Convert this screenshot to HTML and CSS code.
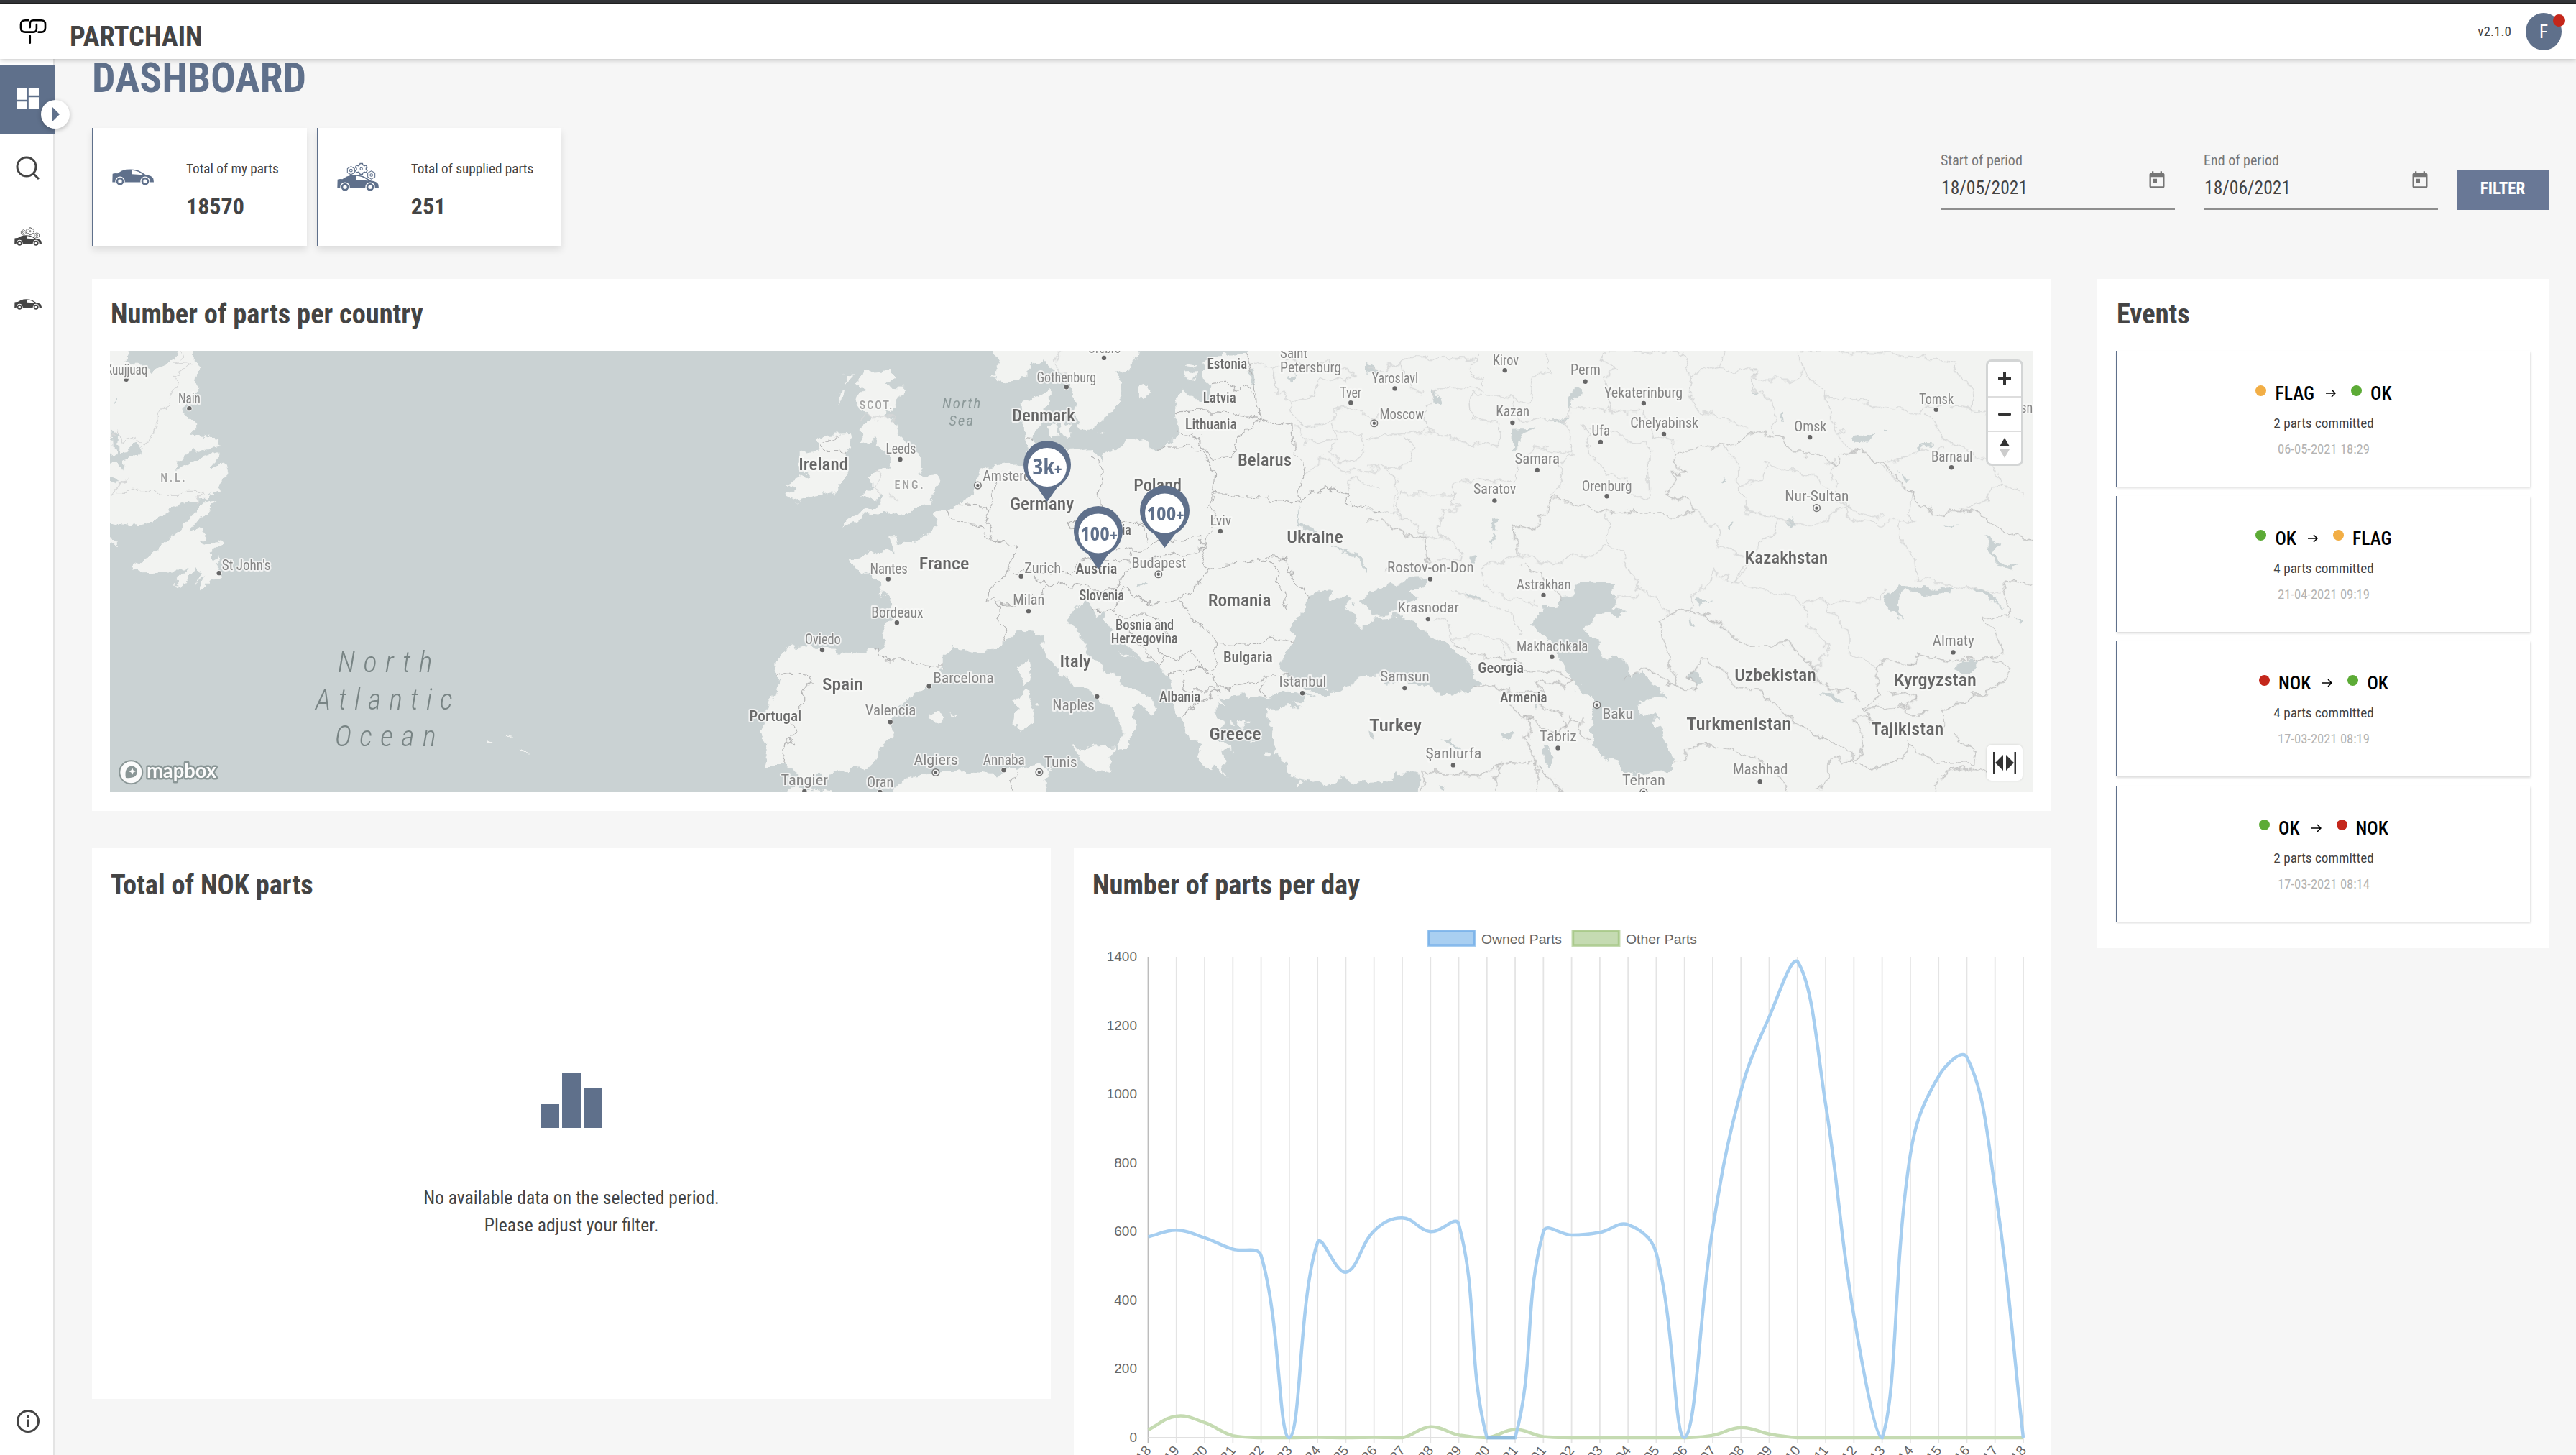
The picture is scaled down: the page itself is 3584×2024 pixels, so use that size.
FILE: index.html
```
<!DOCTYPE html>
<html lang="en">
<head>
<meta charset="utf-8">
<title>PartChain – Dashboard</title>
<link rel="stylesheet" href="styles.css">
</head>
<body>
<svg class="defs" aria-hidden="true">
  <symbol id="car" viewBox="204 98 174 68">
    <path fill="currentColor" d="M205 153L206 118Q212 115 226 116Q245 103 262 100Q300 96 320 107L345 122Q371 125 376 138L378 153Z"/>
    <path fill="#fff" d="M285 103V119L333 122Q316 106 285 103Z"/>
    <circle cx="237" cy="149" r="20" fill="#fff"/><circle cx="342" cy="149" r="20" fill="#fff"/>
    <circle cx="237" cy="149" r="12" fill="none" stroke="currentColor" stroke-width="8"/>
    <circle cx="342" cy="149" r="12" fill="none" stroke="currentColor" stroke-width="8"/>
  </symbol>
  <symbol id="gears" viewBox="204 49 174 50">
    <g fill="none" stroke="currentColor" stroke-width="3.2">
      <path d="M262 65L277 74V91L262 99L247 91V74Z"/><circle cx="262" cy="82" r="5.5"/>
      <path stroke-width="4" d="M300 53H310L312 59L318 63L325 60L330 69L325 73V79L330 82L325 91L318 88L312 92L310 98H300L298 92L292 88L285 91L280 82L285 79V73L280 69L285 60L292 63L298 59Z"/>
      <circle cx="305" cy="75" r="5"/>
      <path d="M347 84L362 92V109L347 118L332 109V92Z"/><circle cx="347" cy="101" r="5.5"/>
    </g>
  </symbol>
  <symbol id="calendar" viewBox="0 0 24 24"><path fill="currentColor" d="M19 3h-1V1h-2v2H8V1H6v2H5c-1.11 0-1.99.9-1.99 2L3 19c0 1.1.89 2 2 2h14c1.1 0 2-.9 2-2V5c0-1.1-.9-2-2-2zm0 16H5V8h14v11zM7 10h5v5H7z"/></symbol>
  <symbol id="arrow" viewBox="0 0 14 12"><path fill="none" stroke="#000" stroke-width="1.5" d="M0 6H12.5M8 1L13 6L8 11"/></symbol>
</svg>

<div class="app">
  <div class="browser-edge"></div>
  <header class="header">
    <svg class="logo" viewBox="51 48 116 108" fill="none" stroke="#000" stroke-width="8" stroke-linecap="round">
      <path d="M90 54H76Q57 54 57 72V86Q57 104 76 104H110Q124 104 124 90V72"/>
      <path stroke="#fff" stroke-width="14" stroke-linecap="butt" d="M96 80V70Q96 54 110 54"/>
      <path d="M96 84V70Q96 54 110 54H144Q161 54 161 70V86Q161 104 144 104H132"/>
      <path d="M96 120V150"/>
    </svg>
    <div class="brand">PARTCHAIN</div>
    <div class="version">v2.1.0</div>
    <div class="avatar">F<span class="avatar-badge"></span></div>
  </header>

  <div class="shell">
    <nav class="sidebar">
      <a class="nav-item active"><svg width="30" height="30" viewBox="3 3 18 18"><path fill="#fff" d="M3 13h8V3H3zM3 21h8v-6.500H3zM12.500 21h8.500V11h-8.500zM12.500 3v6.500h8.500V3z"/></svg></a>
      <a class="nav-item"><svg width="34" height="34" viewBox="0 0 34 34" fill="none" stroke="#444" stroke-width="3"><circle cx="15" cy="15" r="13"/><path d="M24 24L32 32"/></svg></a>
      <a class="nav-item stack"><svg width="38" height="11"><use href="#gears"/></svg><svg width="38" height="15"><use href="#car"/></svg></a>
      <a class="nav-item"><svg width="38" height="15"><use href="#car"/></svg></a>
      <a class="nav-item info"><svg width="34" height="34" viewBox="0 0 34 34"><circle cx="17" cy="17" r="14.500" fill="none" stroke="#444" stroke-width="3"/><path fill="#444" d="M15.300 9h3.400v3.200h-3.400zM15.300 14.500h3.400v10.500h-3.400z"/></svg></a>
      <span class="expand"><svg width="10" height="20" viewBox="0 0 10 20"><path fill="#5f708b" d="M0 0L10 10L0 20Z"/></svg></span>
    </nav>

    <main class="main">
      <h1 class="page-title">DASHBOARD</h1>
      <section class="toolbar">
        <div class="stat">
          <svg class="stat-icon single" width="58" height="23"><use href="#car"/></svg>
          <div><div class="stat-label">Total of my parts</div><div class="stat-value">18570</div></div>
        </div>
        <div class="stat">
          <div class="stat-icon stack"><svg width="58" height="17"><use href="#gears"/></svg><svg width="58" height="23"><use href="#car"/></svg></div>
          <div><div class="stat-label">Total of supplied parts</div><div class="stat-value">251</div></div>
        </div>
        <div class="filters">
          <div class="field"><label>Start of period</label><div class="field-row"><span>18/05/2021</span><svg width="28" height="28"><use href="#calendar"/></svg></div></div>
          <div class="field"><label>End of period</label><div class="field-row"><span>18/06/2021</span><svg width="28" height="28"><use href="#calendar"/></svg></div></div>
          <button class="filter-btn">FILTER</button>
        </div>
      </section>

      <section class="content">
        <div class="left">
          <article class="card map-card">
            <h2>Number of parts per country</h2>
            <div class="map">
              <svg id="map" viewBox="153 488 2675 614" width="2675" height="614">
                <defs>
                  <filter id="rough" filterUnits="userSpaceOnUse" x="120" y="460" width="2740" height="670" color-interpolation-filters="sRGB">
                    <feTurbulence type="fractalNoise" baseFrequency="0.05" numOctaves="4" seed="4" result="n"/>
                    <feDisplacementMap in="SourceGraphic" in2="n" scale="20" xChannelSelector="R" yChannelSelector="G"/>
                  </filter>
                </defs>
                <rect x="153" y="488" width="2675" height="614" fill="#cad2d3"/>
                <g filter="url(#rough)">
                  <g class="land" transform="translate(140 460) scale(.574 .4209)">
                    <path d="M0 40H70L62 95L85 112L108 120L118 138L150 118L180 92L190 40H226L232 130L225 175L238 190L215 215L200 270L225 310L225 345L260 352L292 378L230 400L180 430L186 442L178 454L205 448L240 420L282 402L285 420L270 445L308 440L312 465L292 492L292 518L250 560L205 566L165 595L125 632L95 640L62 645L0 632Z"/>
                    <path d="M285 560L262 578L245 612L215 668L238 655L250 665L237 690L264 700L290 688L298 700L265 735L272 760L300 737L280 772L294 798L258 855L238 856L262 808L226 842L248 800L225 795L205 828L170 844L205 795L150 795L82 797L86 778L125 742L155 705L190 655L228 600L250 568Z"/>
                    <path d="M0 680L38 695V708L0 705Z"/>
                    <path d="M928 1348L946 1354L940 1358L928 1354ZM978 1336L990 1340L980 1343ZM1020 1392L1044 1396L1030 1403Z"/>
                  </g>
                  <g class="water" transform="translate(140 460) scale(.574 .4209)">
                    <path d="M28 330L42 345L40 395L62 392L92 372L100 392L98 420L72 418L50 430L48 462L35 440L0 445V420L32 405ZM34 214L40 214L38 245L34 240ZM34 480L48 492L38 508L28 495Z"/>
                  </g>
                  <g class="land" transform="translate(1020 460) scale(.574 .4209)">
                    <path d="M305 152L322 138L384 133L386 150L362 185L415 190L410 215L380 262L362 278L402 302L408 345L422 372L456 412L458 450L448 480L492 476L498 512L468 560L482 575L402 606L350 612L320 605L297 635L263 648L275 630L320 590L350 586L362 560L340 566L310 546L342 520L342 500L328 478L350 460L375 455L382 430L362 400L345 385L350 355L310 362L308 330L328 310L335 290L310 262L298 240L302 215L316 195L303 172Z"/>
                    <path d="M218 342L280 340L290 382L268 405L280 450L268 520L200 542L150 562L130 550L150 525L136 510L182 480L158 452L158 402L212 395L205 362Z"/>
                    <path d="M262 190L270 190L264 225L256 240ZM275 150L292 140L282 170L270 175Z"/>
                    <path d="M622 40L645 100L630 150L660 165L692 160L722 122L750 98L772 130L800 142L815 190L832 240L826 270L840 325L872 325L878 290L926 275L937 230L942 170L925 142L962 118L975 92L985 40Z"/>
                    <path d="M985 188L1006 176L1000 218L984 222Z"/>
                    <path d="M768 190L768 240L752 262L750 300L735 330L732 365L742 372L790 400L830 398L872 392L888 430L895 412L930 395L960 370L1000 362L1012 388L1040 388L1075 362L1080 345L1085 332L1072 300L1072 230L1092 192L1112 210L1130 240L1162 222L1166 182L1135 150L1133 110L1157 85L1245 80L1256 40H1600V1500L1500 1500L1475 1470L1440 1502L1390 1482L1345 1470L1350 1430L1308 1400L1312 1350L1293 1312L1298 1245L1375 1238L1345 1222L1290 1216L1240 1198L1200 1210L1180 1205L1196 1242L1170 1226L1170 1262L1190 1310L1160 1332L1218 1392L1183 1382L1192 1470L1166 1428L1160 1462L1140 1442L1124 1400L1130 1372L1100 1362L1084 1282L1070 1250L1056 1152L1030 1110L990 1080L930 1010L900 950L886 920L876 947L865 930L862 905L850 893L813 930L815 978L852 1010L870 1080L900 1130L940 1145L946 1170L1002 1200L1028 1252L1015 1272L990 1235L963 1245L965 1282L982 1300L960 1352L946 1388L934 1385L946 1330L930 1280L900 1228L860 1190L838 1180L800 1138L765 1080L750 1020L722 992L690 990L655 1035L610 1070L575 1062L542 1045L510 1070L510 1112L500 1140L475 1180L420 1215L390 1262L380 1300L397 1340L360 1380L350 1412L315 1457L260 1460L200 1470L180 1492L150 1450L125 1440L75 1440L85 1380L65 1335L90 1250L110 1170L105 1112L107 1060L150 1035L200 1052L280 1055L352 1060L370 1010L387 950L385 900L355 850L345 822L295 790L283 748L350 735L365 725L390 737L380 678L395 678L402 700L442 695L487 650L490 600L522 590L562 560L590 510L600 462L650 440L690 435L708 440L716 400L705 360L703 300L698 240L720 225Z"/>
                    <path d="M823 1382L870 1375L930 1372L910 1420L917 1462L870 1442L832 1405Z"/>
                    <path d="M680 1212L715 1190L730 1222L723 1310L695 1327L685 1300L690 1242Z"/>
                    <path d="M695 1112L718 1090L720 1078L724 1130L712 1172L697 1150Z"/>
                    <path d="M478 1280L505 1268L512 1280L495 1302ZM530 1262L542 1264L535 1270Z"/>
                    <path d="M370 1560L400 1502L440 1472L500 1460L580 1456L640 1462L690 1450L740 1430L772 1452L755 1492L762 1560ZM100 1560L120 1515L180 1512L250 1530V1560Z"/>
                    <path d="M762 322L782 308L788 345L768 350ZM790 308L826 300L822 352L796 350ZM888 335L898 340L892 350Z"/>
                    <path d="M1098 108L1118 112L1112 125L1096 122ZM1092 142L1122 138L1118 165L1092 158Z"/>
                    <path d="M1225 1285L1250 1290L1240 1310ZM1290 1388L1300 1392L1292 1408ZM1200 1290L1220 1310L1205 1312ZM1368 1482L1378 1490L1370 1510ZM1255 1350L1268 1355L1258 1362ZM930 1068L975 1085L940 1080Z"/>
                  </g>
                  <g class="water" transform="translate(1020 460) scale(.574 .4209)">
                    <path d="M1385 900L1390 875L1410 862L1448 858L1452 882L1502 888L1482 925L1512 935L1520 990L1540 985L1600 965V1145L1525 1142L1470 1192L1400 1193L1345 1168L1323 1122L1330 1090L1355 1030L1352 970L1382 940Z"/>
                    <path d="M1300 1213L1345 1190L1380 1205L1410 1212L1360 1228L1320 1224Z"/>
                    <path d="M975 848L1000 832L1003 838L985 852ZM1245 130L1256 170L1268 178L1262 130ZM1340 148L1366 146L1355 162ZM1372 580L1380 640L1410 655L1400 662L1374 645ZM1440 705L1510 735L1540 805L1528 800L1505 745Z"/>
                  </g>
                  <g class="land" transform="translate(1900 460) scale(.625 .4209)"><path d="M0 20H1530V1580H0Z"/></g>
                  <g class="water" transform="translate(1900 460) scale(.625 .4209)">
                    <path d="M-10 972L20 952L80 943L130 990L182 1040L240 1110L251 1160L230 1195L200 1204L160 1200L125 1162L60 1167L35 1140L-10 1140Z"/>
                    <path d="M-10 885L35 850L100 822L132 820L130 845L92 862L118 882L80 907L62 935L18 942L0 915Z"/>
                    <path d="M462 835L500 832L550 838L556 895L548 920L578 935L510 938L504 972L485 990L520 1030L535 1080L576 1090L582 1130L592 1150L600 1128L625 1132L632 1160L658 1185L662 1215L632 1222L608 1212L610 1262L650 1268L655 1285L630 1285L655 1310L668 1345L678 1402L690 1458L640 1462L600 1472L572 1450L560 1425L522 1412L508 1370L502 1310L512 1262L500 1212L475 1185L450 1130L428 1085L415 1030L376 980L384 925L425 910L440 872L465 868Z"/>
                    <path d="M1160 870L1190 846L1310 852L1308 875L1262 872L1212 862L1188 872L1186 935L1200 965L1172 935L1158 915ZM1302 1108L1330 1093L1362 1092L1352 1122L1330 1126ZM1350 856L1382 862L1412 905L1395 900ZM1395 750L1448 785L1440 795L1400 770ZM1375 675L1395 690L1410 710L1395 760L1390 715ZM718 925L730 990L722 985ZM735 875L745 892L775 890L745 912ZM725 1125L745 1130L748 1155L732 1170L722 1150ZM1010 1195L1050 1200L1072 1228L1045 1222ZM1088 352L1112 348L1132 352L1120 372L1092 370ZM1155 320H1165V328H1155ZM1245 365L1260 368L1232 400L1225 415ZM1190 465L1210 490L1200 492ZM792 485L798 490L794 502L789 498ZM808 628L815 630L814 655L810 650ZM945 615L960 640H942ZM862 195L880 205L868 205ZM925 280L933 290L922 288ZM1285 630L1315 638L1300 640ZM1442 945L1462 962L1458 970Z"/>
                    <path d="M330 325L382 322L350 340L345 365L330 385L328 345ZM412 295L450 292L442 306L415 305ZM470 182L480 190L470 230L455 265L450 240ZM152 198L160 205L166 248L158 245ZM228 745L242 740L236 770L228 768ZM335 400L362 405L350 412ZM285 620L296 625L290 660L284 655ZM282 670L286 672L280 710L276 705ZM215 862L250 872L265 888L240 882ZM0 100L20 120L30 150L0 140Z"/>
                    <path d="M300 1330L335 1325L325 1355L300 1358ZM390 1370L402 1375L420 1410L410 1438L398 1425ZM165 1355L195 1360L215 1382L180 1365ZM5 1320L15 1325L20 1350L8 1345ZM-10 1502L40 1500L70 1465L100 1462L118 1470L110 1560H-10ZM165 1500L180 1505L172 1525ZM370 1235L385 1240L380 1248Z"/>
                  </g>
                </g>
                <g class="borders regional" filter="url(#rough)">
                  <g transform="translate(140 460) scale(.574 .4209)"><path d="M200 67L205 85L185 105L215 115L180 150L185 185L160 240L140 265L140 310L125 355L105 375L90 362L75 355L55 368L38 335L24 360M42 533H246L235 566M24 540L45 510L55 490L70 485"/></g>
                  <g transform="translate(1020 460) scale(.574 .4209)"><path d="M1256 100L1310 130L1320 200L1350 240L1370 310L1420 310L1460 300L1460 270L1480 250L1540 280L1568 280M1310 130L1350 90L1400 120L1440 100L1500 140L1490 180L1420 150L1400 210L1350 235M1362 315L1380 370L1460 360L1450 310M1460 330L1520 340L1530 400L1490 440L1440 410L1450 370M1390 470L1430 420L1500 470L1568 460M1490 530L1500 490L1568 520M800 67L780 100L800 140M345 455L360 480L345 520L355 560M310 290L380 280L400 300M380 545L395 555"/></g>
                  <g transform="translate(1900 460) scale(.625 .4209)"><path d="M0 120L40 130L100 85L245 95L250 67M245 95L235 150L260 165L265 200L195 185L160 195L150 250L130 255L135 330L60 345L0 360M80 100L90 180L130 200M232 245L240 210L330 225L365 245L375 145L415 140L400 67M232 245L235 290L300 300L295 380L220 370L180 345L135 335M330 225L340 290L440 300L460 260L530 270L545 230L530 150L560 130L525 100L530 67M440 300L460 330L455 400L410 390L375 380L340 420L340 495L300 500L240 490L195 510L190 580L210 590L170 595L160 660L170 680L135 680M135 680L70 600L0 600M70 600L75 530L110 535L195 545M0 450L45 455L100 440L110 380L90 345M45 455L70 500L60 600M410 550L440 500L430 440L460 400M480 310L500 400L530 470L580 490L585 555L635 550L630 360L590 370L560 330L490 325M545 230L540 270L620 270L640 350L690 370L690 400M730 145L720 210L740 260L800 290L850 330M540 67L700 67L730 145L780 120L800 67M780 120L865 135L870 160L960 160L975 130L965 67M865 135L860 190L900 220L910 330M975 130L1025 215L1035 290L1070 370L1080 400M1025 215L1110 230L1150 260L1240 270L1250 240L1370 260L1380 280M970 67L1190 75L1310 110L1320 170L1360 190L1350 260M1250 270L1280 340L1320 390L1400 440L1410 500L1460 540M1140 440L1180 430L1220 400L1290 385M1410 500L1380 560L1330 600"/>
                  <path d="M335 740L420 775L460 735L500 740L540 710L535 600M540 710L570 740L610 860L650 885L670 940M555 880L610 875M730 590L780 660L790 710L850 760L820 830L780 790L760 840L730 870L720 920M920 620L910 670L880 715L850 720L850 790L820 830L960 890L975 905L980 970L1020 1020L1030 1070L990 1120M975 895L1150 895L1160 850M1020 890L1075 1000L1075 1060L1140 1115M1070 580L1070 620L1150 640L1190 620L1190 700L1225 750L1230 820L1340 850L1412 870M795 375L830 450L830 530L850 600L920 620L980 640L1030 620L1070 580L1000 480L920 450L890 435L880 500L830 515M1040 480L1050 560L1080 600L1150 615M1140 440L1220 540L1200 600L1225 640L1190 630M1035 480L1040 420L1020 440M190 860L260 890L330 940L345 1000L335 1010M260 800L280 870L330 890L370 890L380 910M135 700L140 760L215 760L220 720L170 680M330 650L340 740L290 760L260 800M150 950L180 960L190 1010L240 1010L300 1020L330 1060M190 1010L195 1040M300 1020L310 1075"/></g>
                </g>
                <g class="borders" filter="url(#rough)">
                  <g transform="translate(1020 460) scale(.574 .4209)"><path d="M245 350L215 375L230 405L268 405M1165 170L1190 165L1220 195L1255 190L1280 285L1250 330L1215 375L1210 410L1160 420L1145 390L1130 350L1075 335M1075 270L1180 268L1280 290L1355 315L1360 400L1390 460L1370 540L1375 570L1290 550L1170 540L1165 570L1150 590M1245 80L1265 180L1270 240M1035 385L1140 392L1165 470L1160 560L1170 610L1145 715L1135 690L1060 695L1030 690L1000 725L960 728L920 720M875 420L890 470L885 560L895 610L930 640L990 640L1000 690M895 600L820 640L840 690L860 715M705 358L735 360M650 470L625 540L630 590L610 640L640 690L690 715L670 795L640 830L620 855L612 885L635 880L645 905L680 900M520 590L535 635L590 640L610 680L635 685M545 575L600 580L625 600M680 800L760 800L830 800M645 905L640 950L665 1000L655 1035M680 885L700 870L740 885L760 845L812 835L860 855L925 855L960 790L965 740M830 790L835 765L860 755L960 765M760 845L730 810M350 1055L380 1090L430 1090L470 1110L510 1112M107 1140L130 1130L190 1140L195 1165L165 1190L165 1260L135 1290L150 1320L130 1380L125 1440M860 925L920 925L935 880L950 845L1000 905L1080 885L1110 870L1155 780L1270 760M965 770L1060 740L1145 720L1130 760L1155 780M1080 885L1115 960L1150 985L1155 1010L1175 1030L1265 1035L1300 1010L1355 1030M1270 750L1320 800L1345 920M1270 750L1340 760L1365 830L1395 880M930 940L1030 945L1030 985L1060 1010M920 930L1000 1060L1030 1110M1030 1050L1080 1090L1110 1060L1135 1120L1165 1115L1170 1030M1030 1110L1060 1060M1055 1150L1090 1120L1135 1120L1170 1140L1175 1180L1265 1165L1290 1140L1345 1140M1090 1120L1100 1190L1180 1190L1120 1230L1090 1280M1290 1140L1280 1190L1295 1215M680 1525L670 1490L690 1450M1375 570L1400 530L1440 520L1490 530L1490 570L1568 600"/></g>
                  <g transform="translate(1900 460) scale(.625 .4209)"><path d="M0 630L40 630L90 670L135 680L140 760L110 780L50 785M335 745L330 640L375 660L385 620L415 555L535 600L560 610L600 590L690 615L730 600L725 570L670 535L690 500L685 470L715 470L680 430L685 410L795 375L850 350L870 330L920 345L950 400L1020 410L1040 440L1095 390L1160 450L1260 605M1260 605L1290 610L1300 590L1360 600L1400 640L1440 680L1485 690M350 770L355 790L390 800L430 870L440 890M195 1040L240 1070L300 1080L340 1100L365 1120M245 1165L300 1180L350 1200L400 1190L380 1160L395 1150L440 1185L460 1155L400 1120L365 1120M300 1180L320 1240L345 1275L370 1285L360 1340L370 1400L385 1440L380 1525M345 1275L400 1310L430 1350L430 1320L460 1280L480 1290L475 1330L500 1355M380 1230L430 1260L445 1310M340 1430L310 1425L270 1470L130 1460L120 1525M380 1435L340 1430M310 1430L285 1480L290 1520M385 1440L440 1525M580 1155L600 1130L630 1115L660 1150L680 1180L735 1185L720 1140L755 1090L800 1130L830 1180L880 1185L920 1260L1010 1340L1080 1385V1430L1035 1415L1035 1480L1005 1525M695 1180L650 955L720 920L800 980L850 1045L940 1035L990 1090L1000 1150L1030 1185L1080 1190L1100 1225M685 1425L705 1420L710 1395L745 1365L850 1405L900 1440L940 1525M1080 1425L1140 1450L1165 1420L1200 1420L1210 1360L1240 1410L1270 1430L1355 1430L1360 1390L1310 1330M1085 1285L1110 1350L1085 1425M1085 1285L1120 1280L1110 1250L1150 1210L1130 1170L1150 1090L1215 1105L1225 1070L1310 1090L1390 1085L1430 1120L1420 1160L1380 1200L1345 1200L1330 1235L1285 1240L1285 1330M1110 1250L1190 1240L1200 1265L1250 1260M1160 1200L1200 1190L1230 1220L1180 1250M1390 1085L1420 1070L1400 990L1370 950L1430 940L1412 825L1485 835M1270 1525L1265 1490L1300 1460L1355 1445L1400 1470"/></g>
                </g>
                <g id="labels"></g>
                <g class="watermark">
                  <circle cx="182.300" cy="1074.300" r="16" fill="#fbfbfb" stroke="#8a9696" stroke-width="2"/>
                  <path fill="#8a9696" d="M175 1082C173 1071 177 1065.500 184 1065.500A8 8 0 0 1 191 1073C191 1080 185 1083 175 1082Z"/>
                  <path fill="#fbfbfb" d="M184 1068L185.500 1071.500L189 1073L185.500 1074.500L184 1078L182.500 1074.500L179 1073L182.500 1071.500Z"/>
                  <text x="204" y="1082" textLength="97" lengthAdjust="spacingAndGlyphs">mapbox</text>
                </g>
                <g class="pin"><path d="M1457 698L1443 678Q1424 666 1424 646A33 33 0 0 1 1490 646Q1490 666 1471 678Z"/><circle cx="1457" cy="650" r="27"/><text x="1457" y="660" textLength="41" lengthAdjust="spacingAndGlyphs" font-size="31">3k<tspan font-size="22">+</tspan></text></g>
                <g class="pin"><path d="M1528 792L1514 771Q1494 759 1494 738A34 34 0 0 1 1562 738Q1562 759 1542 771Z"/><circle cx="1528" cy="742" r="27.500"/><text x="1529" y="752" textLength="52" lengthAdjust="spacingAndGlyphs" font-size="27">100<tspan font-size="22">+</tspan></text></g>
                <g class="pin"><path d="M1620.500 762L1606 743Q1586 731 1586 710A34 34 0 0 1 1655 710Q1655 731 1635 743Z"/><circle cx="1620.500" cy="714" r="27.500"/><text x="1621.500" y="724" textLength="52" lengthAdjust="spacingAndGlyphs" font-size="27">100<tspan font-size="22">+</tspan></text></g>
              </svg>
              <div class="map-nav">
                <span><svg width="20" height="20"><path fill="#333" d="M8 1h4v7h7v4h-7v7h-4v-7h-7v-4h7z"/></svg></span>
                <span><svg width="20" height="20"><rect x="1" y="8" width="18" height="4.500" rx="2" fill="#333"/></svg></span>
                <span><svg width="14" height="28"><path fill="#333" d="M7 0L14 12H0Z"/><path fill="#ccc" d="M7 28L0 16H14Z"/></svg></span>
              </div>
              <div class="map-fit"><svg width="32" height="30"><path fill="#333" d="M0 0h2.500v30h-2.500zM29.500 0h2.500v30h-2.500zM14 4v22L3 15zM18 4v22l11-11z"/></svg></div>
            </div>
          </article>

          <div class="charts">
            <article class="card nok-card">
              <h2>Total of NOK parts</h2>
              <svg class="bars" width="86" height="76"><path fill="#5f708b" d="M0 43h26v33h-26zM30 0h26v76h-26zM60 21h26v55h-26z"/></svg>
              <p>No available data on the selected period.<br>Please adjust your filter.</p>
            </article>
            <article class="card line-card">
              <h2>Number of parts per day</h2>
              <svg id="chart" viewBox="1494 1254 1360 770" width="1360" height="770"></svg>
            </article>
          </div>
        </div>

        <aside class="card events">
          <h2>Events</h2>
          <div class="event"><div class="change"><i class="dot flag"></i>FLAG<svg width="14" height="12"><use href="#arrow"/></svg><i class="dot ok"></i>OK</div><div class="count">2 parts committed</div><time>06-05-2021 18:29</time></div>
          <div class="event"><div class="change"><i class="dot ok"></i>OK<svg width="14" height="12"><use href="#arrow"/></svg><i class="dot flag"></i>FLAG</div><div class="count">4 parts committed</div><time>21-04-2021 09:19</time></div>
          <div class="event"><div class="change"><i class="dot nok"></i>NOK<svg width="14" height="12"><use href="#arrow"/></svg><i class="dot ok"></i>OK</div><div class="count">4 parts committed</div><time>17-03-2021 08:19</time></div>
          <div class="event"><div class="change"><i class="dot ok"></i>OK<svg width="14" height="12"><use href="#arrow"/></svg><i class="dot nok"></i>NOK</div><div class="count">2 parts committed</div><time>17-03-2021 08:14</time></div>
        </aside>
      </section>
    </main>
  </div>
</div>
<script src="dashboard.js"></script>
</body>
</html>
```
FILE: styles.css
```
* { box-sizing: border-box; }
body { margin: 0; background: #f6f6f6; color: #444; font-family: "Roboto Condensed", Roboto, sans-serif; }
.defs { display: none; }
h1, h2, p { margin: 0; }
.app { height: 2024px; overflow: hidden; display: flex; flex-direction: column; }
.browser-edge { height: 6px; flex: none; background: #343539; border-bottom: 2px solid #222; }
.header { position: relative; z-index: 3; height: 76px; flex: none; background: #fff; box-shadow: 0 1px 7px rgba(0,0,0,.25); display: flex; align-items: center; padding: 0 20px 0 27px; }
.logo { width: 38px; height: 36px; }
.brand { margin-left: 32px; padding-top: 13px; font-size: 38.4px; line-height: 46px; font-weight: 700; flex: 1; }
.version { font-size: 19.2px; margin: 0 20px 2px 0; }
.avatar { position: relative; width: 50px; height: 52px; border-radius: 50%; background: #5f708b; color: #fff; font-size: 25px; line-height: 53px; text-align: center; }
.avatar-badge { position: absolute; right: -5px; top: 2px; width: 17px; height: 17px; border-radius: 50%; background: #c4271b; }

.shell { flex: 1; display: flex; min-height: 0; }
.sidebar { position: relative; z-index: 2; width: 76px; flex: none; background: #fff; border-right: 2px solid #e4e4e4; padding-top: 8px; display: flex; flex-direction: column; }
.nav-item { height: 95px; margin-right: -2px; padding-left: 2px; display: flex; align-items: center; justify-content: center; }
.nav-item.active { background: #5f708b; height: 96px; padding-bottom: 3px; }
.nav-item.info { margin-top: auto; }
.stack { display: flex; flex-direction: column; }
.stack svg { display: block; overflow: visible; }
#gears { overflow: visible; }
.expand { position: absolute; left: 57px; top: 57px; width: 40px; height: 40px; border-radius: 50%; background: #fff; box-shadow: 0 2px 6px rgba(0,0,0,.25); display: flex; align-items: center; justify-content: center; padding-left: 2px; }

.main { flex: 1; padding: 0 38px 0 52px; min-width: 0; }
.page-title { font-size: 57.6px; line-height: 53px; color: #5f708b; }
.toolbar { display: flex; margin: 43px 0 46px; height: 164px; gap: 14px; }
.stat { display: flex; align-items: flex-start; background: #fff; border-left: 2px solid #5f708b; padding: 45px 39px 0 26px; box-shadow: 0 6px 10px rgba(0,0,0,.1); color: #444; }
.stat-icon { color: #5f708b; width: 58px; margin-right: 45px; margin-top: 3px; }
.stat-icon.single { margin-top: 12px; }
.stat-label { font-size: 19.2px; line-height: 24px; }
.stat-value { font-size: 32px; line-height: 38px; margin-top: 21px; font-weight: 700; }
.filters { margin-left: auto; display: flex; align-items: flex-end; padding-bottom: 50px; }
.field { width: 326px; margin-right: 40px; border-bottom: 2px solid #8e8e8e; height: 81px; }
.field:nth-child(2) { margin-right: 26px; }
.field label { display: block; font-size: 20px; line-height: 24px; color: #777; }
.field-row { display: flex; justify-content: space-between; font-size: 25.6px; line-height: 34px; margin-top: 9px; padding: 0 11px 0 1px; color: #444; }
.field-row svg { color: #757575; margin-top: -7px; }
.filter-btn { width: 128px; height: 56px; border: 0; padding: 0 0 3px; background: #697896; color: #fff; font: 700 23px "Roboto Condensed", Roboto, sans-serif; }

.content { display: grid; grid-template-columns: 2726px 628px; gap: 64px; align-items: start; }
.card { background: #fff; }
.card h2 { font-size: 38.4px; line-height: 46px; font-weight: 700; padding-left: 1px; }
.left { display: flex; flex-direction: column; gap: 52px; }
.map-card { height: 740px; padding: 26px 25px; }
.map { position: relative; margin-top: 28px; height: 614px; overflow: hidden; }
.map > svg { display: block; }
.land { fill: #f2f3f1; }
.water { fill: #cad2d3; }
.borders path { fill: none; stroke: #b5b5b5; stroke-width: 1.2px; vector-effect: non-scaling-stroke; }
.borders.regional path { stroke: #d6d7d7; stroke-width: 1.4px; }
#labels text { paint-order: stroke; stroke: rgba(248,248,247,.85); stroke-width: 4px; stroke-linejoin: round; fill: #858585; font-size: 20px; }
#labels .country { font-size: 23px; font-weight: 500; fill: #666; }
#labels .minor { font-size: 19.5px; font-weight: 500; fill: #6b6b6b; }
#labels .region { font-size: 16px; font-weight: 500; fill: #a3a3a3; }
#labels .sea { font-size: 21px; font-style: italic; font-weight: 400; fill: #8c9999; stroke: none; }
#labels .ocean { font-size: 40px; font-style: italic; font-weight: 300; fill: #788484; stroke: none; }
#labels .town { fill: #666; stroke: #f4f4f4; stroke-width: 2px; paint-order: stroke; }
.watermark text { font: 700 29px Lato, sans-serif; fill: #fbfbfb; stroke: #8a9696; stroke-width: 5px; paint-order: stroke; stroke-linejoin: round; }
.pin path { fill: #5f708b; }
.pin circle { fill: #fff; }
.pin text { font-weight: 700; fill: #5f708b; text-anchor: middle; font-family: "Open Sans", sans-serif; font-stretch: 75%; }
.map-nav { position: absolute; left: 2610px; top: 12px; width: 52px; border: 3px solid #d3d5d5; border-radius: 8px; background: #fff; }
.map-nav span { height: 48px; display: flex; align-items: center; justify-content: center; }
.map-nav span + span { border-top: 2px solid #ddd; }
.map-nav span:last-child { height: 46px; }
.map-fit { position: absolute; left: 2611px; top: 548px; width: 50px; height: 50px; border-radius: 7px; background: #fff; display: flex; align-items: center; justify-content: center; box-shadow: 0 0 3px rgba(0,0,0,.15); }

.charts { display: flex; gap: 32px; align-items: flex-start; }
.nok-card { width: 1334px; height: 766px; padding: 28px 25px; display: flex; flex-direction: column; }
.nok-card .bars { margin: 239px auto 78px; }
.nok-card p { text-align: center; font-size: 25.6px; line-height: 38px; }
.line-card { width: 1360px; padding-top: 28px; overflow: hidden; }
.line-card h2 { padding-left: 26px; }
.line-card svg { display: block; }
#chart text { font: 19px "Liberation Sans", Arial, sans-serif; fill: #666; }

.events { height: 931px; padding: 26px 26px; }
.events h2 { margin-bottom: 28px; }
.event { height: 189px; margin-bottom: 12.5px; border-left: 2px solid #5f708b; box-shadow: 1px 2px 3px rgba(0,0,0,.14); padding-top: 43px; text-align: center; }
.change { height: 32px; display: flex; justify-content: center; align-items: center; color: #000; font-size: 25.6px; font-weight: 500; }
.change svg { margin: 0 21px 0 16px; }
.dot { width: 15px; height: 15px; border-radius: 50%; margin: 0 12px 8px 0; }
.dot.ok { background: #5cab36; }
.dot.flag { background: #f2ae45; }
.dot.nok { background: #c4271b; }
.count { font-size: 19.2px; line-height: 30px; margin-top: 11px; }
.event time { display: block; font-size: 18.6px; line-height: 30px; margin-top: 6px; color: #b3b3b3; }
```
FILE: dashboard.js
```
const NS = 'http://www.w3.org/2000/svg';
function add(parent, tag, attrs, text) {
  const el = document.createElementNS(NS, tag);
  for (const k in attrs) el.setAttribute(k, attrs[k]);
  if (text) el.textContent = text;
  parent.appendChild(el);
  return el;
}

/* Map labels, grouped by map section: [text, left, right, baseline, kind] and [x, y, isCapital]. */
const sections = [
  { x: 140, y: 460, sx: .574, sy: .4209,
    labels: [['Kuujjuaq',12,114,145],['Nain',188,242,241],['N.L.',145,205,500,'region'],["St John's",294,412,790],
      ['North',575,804,1129,'ocean'],['Atlantic',521,853,1251,'ocean'],['Ocean',568,813,1374,'ocean']],
    towns: [[62,161],[215,257],[287,801]] },
  { x: 1020, y: 460, sx: .574, sy: .4209,
    labels: [['Örebro',860,940,73],['Gothenburg',736,880,171],['Estonia',1149,1246,125,'minor'],['Latvia',1139,1219,237,'minor'],
      ['Lithuania',1096,1221,325,'minor'],['Saint',1326,1392,90],['Petersburg',1326,1474,137],['Tver',1471,1523,220],
      ['SCOT.',306,386,258,'region'],['ENG.',391,461,523,'region'],['North',507,600,256,'sea'],['Sea',523,582,313,'sea'],
      ['Denmark',676,829,299,'country'],['Leeds',370,443,407],['Ireland',159,279,460,'country'],['Amsterdam',605,764,497],
      ['Belarus',1223,1354,446,'country'],['Poland',971,1087,530,'country'],['Germany',671,826,592,'country'],
      ['Czechia',866,965,675,'minor'],['Lviv',1156,1208,643],['Ukraine',1342,1479,700,'country'],['France',451,572,789,'country'],
      ['Nantes',332,423,803],['Zurich',706,795,801],['Austria',830,931,803,'minor'],['Budapest',966,1098,783],
      ['Slovenia',839,948,890,'minor'],['Milan',678,755,906],['Romania',1151,1304,909,'country'],['Bosnia and',927,1068,988,'minor'],
      ['Herzegovina',916,1078,1033,'minor'],['Bordeaux',335,461,947],['Oviedo',174,261,1037],['Italy',792,867,1112,'country'],
      ['Bulgaria',1188,1308,1096,'minor'],['Barcelona',485,632,1163],['Istanbul',1323,1438,1177],['Spain',216,315,1187,'country'],
      ['Naples',774,876,1254],['Albania',1033,1133,1225,'minor'],['Valencia',320,443,1271],['Portugal',39,166,1290,'minor'],
      ['Greece',1154,1280,1353,'country'],['Algiers',438,545,1436],['Annaba',606,707,1434],['Tunis',754,834,1442],
      ['Tangier',116,230,1501],['Oran',324,389,1508]],
    towns: [[899,90],[808,186],[1497,238],[405,425],[593,511,1],[1181,663],[376,821],[698,812],[1031,805,1],[716,927],[397,965],
      [216,1055],[475,1175],[1380,1198],[882,1209],[381,1293],[491,1460,1],[656,1452],[742,1459,1],[173,1523],[356,1525]] },
  { x: 1900, y: 460, sx: .625, sy: .4209,
    labels: [['Kirov',283,341,113],['Yaroslavl',14,117,173],['Perm',456,523,146],['Yekaterinburg',531,706,220],['Moscow',31,130,292],
      ['Kazan',290,365,283],['Chelyabinsk',589,741,321],['Ufa',503,544,347],['Samara',332,432,440],['Orenburg',481,593,529],
      ['Saratov',240,335,540],['Tomsk',1232,1309,242],['Omsk',954,1026,332],['Krasnoyarsk',1420,1560,271],['Barnaul',1259,1351,433],
      ['Nur-Sultan',933,1076,563],['Kazakhstan',844,1029,769,'country'],['Rostov-on-Don',48,241,799],['Astrakhan',336,457,855],
      ['Krasnodar',71,208,932],['Almaty',1262,1355,1041],['Makhachkala',336,495,1059],['Georgia',250,352,1131,'minor'],
      ['Samsun',32,142,1159],['Uzbekistan',821,1003,1158,'country'],['Kyrgyzstan',1176,1360,1174,'country'],
      ['Armenia',299,404,1228,'minor'],['Baku',527,595,1284],['Turkmenistan',714,948,1319,'country'],['Tajikistan',1126,1287,1336,'country'],
      ['Turkey',8,125,1323,'country'],['Tabriz',387,470,1356],['Şanlıurfa',133,258,1413],['Mashhad',817,940,1467],['Tehran',571,667,1501]],
    towns: [[310,131],[65,191],[489,168],[619,240],[19,306,1],[327,304],[664,342],[523,368],[382,461],[537,547],[287,562],[1270,261],
      [989,352],[1304,452],[1004,586,1],[144,821],[396,874],[139,953],[1308,1063],[415,1078],[87,1181],[515,1237,1],[428,1379],
      [195,1436],[878,1490],[619,1525,1]] },
];
const labelLayer = document.getElementById('labels');
for (const s of sections) {
  for (const [x, y, capital] of s.towns) {
    const cx = s.x + x * s.sx, cy = s.y + y * s.sy;
    if (capital) add(labelLayer, 'circle', { cx, cy, r: 4.800, fill: '#f4f4f4', stroke: '#777', 'stroke-width': 1.500 });
    add(labelLayer, 'circle', { cx, cy, r: capital ? 2.200 : 3.200, class: 'town' });
  }
  for (const [text, l, r, y, kind] of s.labels) {
    const spaced = kind === 'sea' || kind === 'ocean' || kind === 'region';
    add(labelLayer, 'text', { x: s.x + l * s.sx, y: s.y + y * s.sy, class: kind || '',
      textLength: (r - l) * s.sx, lengthAdjust: spaced ? 'spacing' : 'spacingAndGlyphs' }, text);
  }
}

/* Line chart: parts per day, 18 May to 18 June. */
const owned = [585,604,582,549,530,0,568,482,602,640,600,622,0,0,600,590,598,620,537,0,610,1010,1225,1387,970,355,0,825,1052,1108,725,0];
const other = [23,63,44,6,0,0,1,0,1,0,32,8,0,24,3,0,0,0,0,0,7,30,11,0,0,0,0,0,0,0,0,0];
const area = { left: 1597.500, right: 2815, top: 1331, bottom: 2000 };
const chart = document.getElementById('chart');
const step = (area.right - area.left) / 31;
const px = i => area.left + i * step;
const py = v => area.bottom - v / 1400 * (area.bottom - area.top);

for (let i = 0; i < 32; i++) {
  add(chart, 'path', { d: `M${px(i)} ${area.top}V${area.bottom + 8}`, stroke: i ? '#e4e4e4' : '#bdbdbd', 'stroke-width': 1.800 });
  const day = String(i < 14 ? 18 + i : i - 13).padStart(2, '0');
  add(chart, 'text', { transform: `translate(${px(i) + 5} ${area.bottom + 18}) rotate(-50)`, 'text-anchor': 'end' }, day);
}
add(chart, 'path', { d: `M${area.left} ${area.bottom}H${area.right}`, stroke: '#e0e0e0', 'stroke-width': 1.800 });
for (let v = 0; v <= 1400; v += 200) add(chart, 'text', { x: 1582, y: py(v) + 6, 'text-anchor': 'end' }, String(v));

function curve(values) {
  const p = values.map((v, i) => ({ x: px(i), y: py(v) }));
  const clampY = y => Math.max(area.top, Math.min(area.bottom, y));
  p.forEach((c, i) => {
    const a = p[i - 1] || c, b = p[i + 1] || c;
    const d1 = Math.hypot(c.x - a.x, c.y - a.y), d2 = Math.hypot(b.x - c.x, b.y - c.y);
    const f1 = .4 * d1 / (d1 + d2), f2 = .4 * d2 / (d1 + d2);
    c.in = [c.x - f1 * (b.x - a.x), clampY(c.y - f1 * (b.y - a.y))];
    c.out = [c.x + f2 * (b.x - a.x), clampY(c.y + f2 * (b.y - a.y))];
  });
  return p.map((c, i) => i ? `C${p[i - 1].out} ${c.in} ${c.x},${c.y}` : `M${c.x},${c.y}`).join('');
}
add(chart, 'path', { d: curve(other), fill: 'none', stroke: '#c5dbb2', 'stroke-width': 4.500 });
add(chart, 'path', { d: curve(owned), fill: 'none', stroke: '#a6cef0', 'stroke-width': 4.500 });
add(chart, 'path', { d: `M${px(12)} ${area.bottom}H${px(13)}`, stroke: '#8fbcdc', 'stroke-width': 4.500 });

const legend = [['Owned Parts', 1987, 2061, 112, '#a9cff1', '#7fb5ea'], ['Other Parts', 2188, 2262, 99, '#c5dbb2', '#aaca8c']];
for (const [text, x, tx, w, fill, stroke] of legend) {
  add(chart, 'rect', { x: x - 1.500, y: 1293, width: 68, height: 24, fill });
  add(chart, 'rect', { x: x + 1, y: 1295.500, width: 63, height: 19, fill, stroke, 'stroke-width': 2.500 });
  add(chart, 'text', { x: tx, y: 1312.500, textLength: w, lengthAdjust: 'spacingAndGlyphs' }, text);
}
```
